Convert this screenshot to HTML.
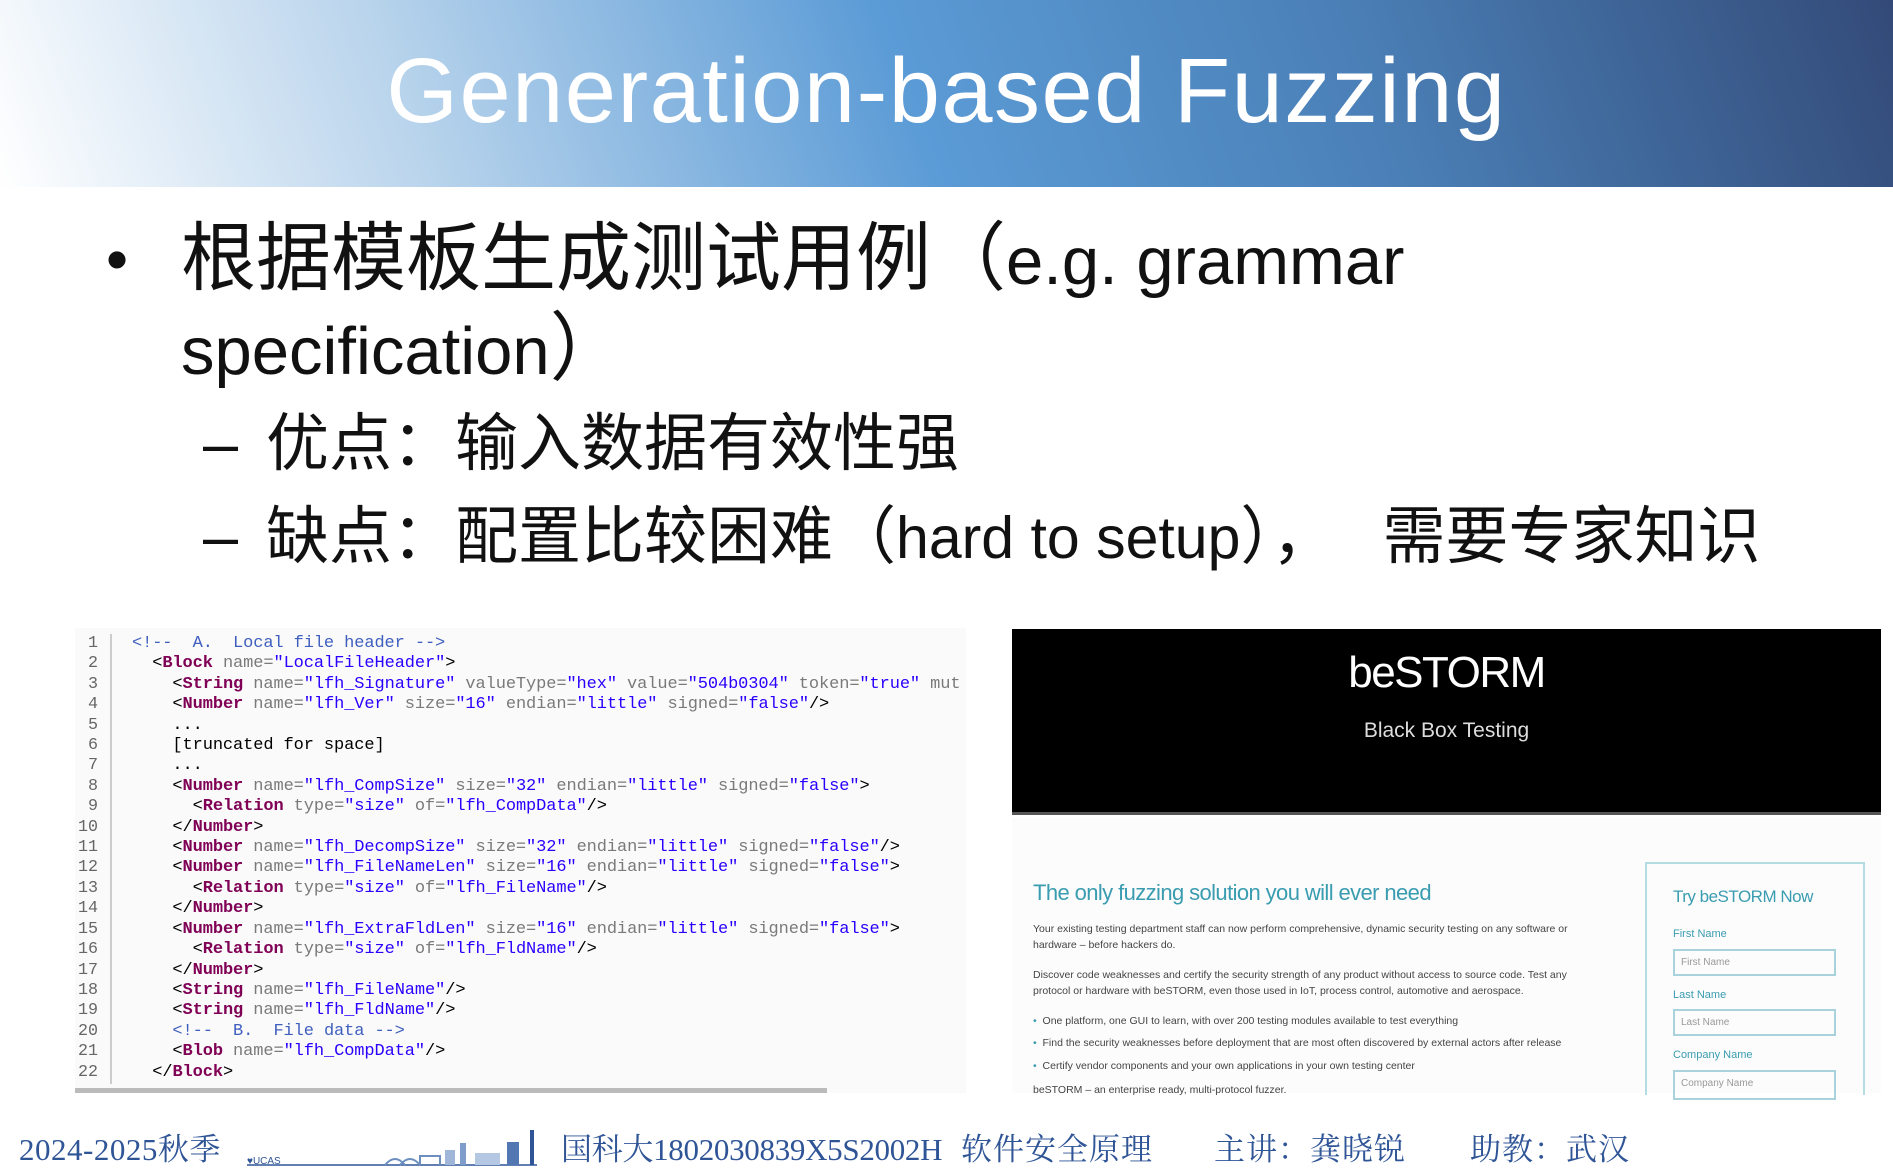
<!DOCTYPE html>
<html><head><meta charset="utf-8">
<style>
*{margin:0;padding:0;box-sizing:border-box}
body{width:1893px;height:1170px;overflow:hidden;background:#fff;position:relative;font-family:"Liberation Sans","Noto Sans CJK SC",sans-serif}
.hdr{position:absolute;left:0;top:0;width:1893px;height:187px;background:linear-gradient(70deg,#ffffff 0%,#b9d4ec 22%,#5b9bd6 48%,#4a7fb6 72%,#334a78 100%)}
.title{position:absolute;left:0;width:1893px;top:36px;text-align:center;color:#fff;font-size:92px;letter-spacing:1.5px;line-height:110px}
.t{position:absolute;color:#111;font-size:63px;line-height:80px;white-space:nowrap;font-family:"Liberation Sans","Noto Sans CJK SC",sans-serif}
.t .c1{font-size:75px}.t .l1{font-size:67px}.t .l2{font-size:59px}
.code{position:absolute;left:75px;top:628px;width:891px;height:465px;background:#fafafa}
.ln{position:absolute;left:40px;width:58px;text-align:right;color:#666;font-family:"Liberation Mono",monospace;font-size:16.7px}
.cl{position:absolute;left:132px;white-space:pre;font-family:"Liberation Mono",monospace;font-size:17px;color:#7a7a7a;letter-spacing:-0.1px}
.k{color:#7f0055;font-weight:bold}.v{color:#2a00ff}.c{color:#3f5fbf}.p{color:#000}
.bs{position:absolute;left:1012px;top:629px;width:869px;height:186px;background:#000;border-bottom:3px solid #555}
.sm{position:absolute;font-size:10.5px;color:#444;white-space:nowrap}
.lab{position:absolute;font-size:11px;color:#3a9cb0}
.inp{position:absolute;left:1673px;width:163px;height:27px;border:2px solid #a9d3dc;font-size:10px;color:#999;padding:6px 6px}
.ft{position:absolute;top:1130px;color:#2f5597;font-size:31px;font-family:"Liberation Serif","Noto Serif CJK SC",serif;white-space:nowrap;line-height:40px}
</style></head><body>
<div class="hdr"></div>
<div class="title">Generation-based Fuzzing</div>

<div class="t" style="left:106px;top:220px">•</div>
<div class="t" style="left:181px;top:218px"><span class="c1">根据模板生成测试用例（</span><span class="l1">e.g. grammar</span></div>
<div class="t" style="left:181px;top:308px"><span class="l1">specification</span><span class="c1">）</span></div>
<div class="t" style="left:203px;top:404px">–</div>
<div class="t" style="left:266px;top:404px">优点：输入数据有效性强</div>
<div class="t" style="left:203px;top:497px">–</div>
<div class="t" style="left:266px;top:497px">缺点：配置比较困难（<span class="l2">hard to setup</span>）， <span style="margin-left:30px">需要专家知识</span></div>

<div class="code"></div>
<div style="position:absolute;left:110px;top:634px;width:2px;height:450px;background:#ccc"></div>
<div style="position:absolute;left:75px;top:1088px;width:752px;height:5px;background:#bbb"></div>
<div class="ln" style="top:634px;line-height:20.4px">1<br>2<br>3<br>4<br>5<br>6<br>7<br>8<br>9<br>10<br>11<br>12<br>13<br>14<br>15<br>16<br>17<br>18<br>19<br>20<br>21<br>22</div>
<div class="cl" style="top:634px;line-height:20.4px;width:834px;overflow:hidden"><span class="c">&lt;!--  A.  Local file header --&gt;</span>
  <span class="p">&lt;</span><span class="k">Block</span> name=<span class="v">"LocalFileHeader"</span><span class="p">&gt;</span>
    <span class="p">&lt;</span><span class="k">String</span> name=<span class="v">"lfh_Signature"</span> valueType=<span class="v">"hex"</span> value=<span class="v">"504b0304"</span> token=<span class="v">"true"</span> mut
    <span class="p">&lt;</span><span class="k">Number</span> name=<span class="v">"lfh_Ver"</span> size=<span class="v">"16"</span> endian=<span class="v">"little"</span> signed=<span class="v">"false"</span><span class="p">/&gt;</span>
<span class="p">    ...
    [truncated for space]
    ...</span>
    <span class="p">&lt;</span><span class="k">Number</span> name=<span class="v">"lfh_CompSize"</span> size=<span class="v">"32"</span> endian=<span class="v">"little"</span> signed=<span class="v">"false"</span><span class="p">&gt;</span>
      <span class="p">&lt;</span><span class="k">Relation</span> type=<span class="v">"size"</span> of=<span class="v">"lfh_CompData"</span><span class="p">/&gt;</span>
    <span class="p">&lt;/</span><span class="k">Number</span><span class="p">&gt;</span>
    <span class="p">&lt;</span><span class="k">Number</span> name=<span class="v">"lfh_DecompSize"</span> size=<span class="v">"32"</span> endian=<span class="v">"little"</span> signed=<span class="v">"false"</span><span class="p">/&gt;</span>
    <span class="p">&lt;</span><span class="k">Number</span> name=<span class="v">"lfh_FileNameLen"</span> size=<span class="v">"16"</span> endian=<span class="v">"little"</span> signed=<span class="v">"false"</span><span class="p">&gt;</span>
      <span class="p">&lt;</span><span class="k">Relation</span> type=<span class="v">"size"</span> of=<span class="v">"lfh_FileName"</span><span class="p">/&gt;</span>
    <span class="p">&lt;/</span><span class="k">Number</span><span class="p">&gt;</span>
    <span class="p">&lt;</span><span class="k">Number</span> name=<span class="v">"lfh_ExtraFldLen"</span> size=<span class="v">"16"</span> endian=<span class="v">"little"</span> signed=<span class="v">"false"</span><span class="p">&gt;</span>
      <span class="p">&lt;</span><span class="k">Relation</span> type=<span class="v">"size"</span> of=<span class="v">"lfh_FldName"</span><span class="p">/&gt;</span>
    <span class="p">&lt;/</span><span class="k">Number</span><span class="p">&gt;</span>
    <span class="p">&lt;</span><span class="k">String</span> name=<span class="v">"lfh_FileName"</span><span class="p">/&gt;</span>
    <span class="p">&lt;</span><span class="k">String</span> name=<span class="v">"lfh_FldName"</span><span class="p">/&gt;</span>
    <span class="c">&lt;!--  B.  File data --&gt;</span>
    <span class="p">&lt;</span><span class="k">Blob</span> name=<span class="v">"lfh_CompData"</span><span class="p">/&gt;</span>
  <span class="p">&lt;/</span><span class="k">Block</span><span class="p">&gt;</span></div>

<div class="bs"></div>
<div style="position:absolute;left:1012px;top:648px;width:869px;text-align:center;color:#fff;font-size:44px;letter-spacing:-1.5px">beSTORM</div>
<div style="position:absolute;left:1012px;top:719px;width:869px;text-align:center;color:#ddd;font-size:21px">Black Box Testing</div>
<div style="position:absolute;left:1012px;top:818px;width:869px;height:275px;background:#fcfcfc"></div>
<div style="position:absolute;left:1033px;top:880px;color:#3a9cb0;font-size:22px;letter-spacing:-0.6px;white-space:nowrap">The only fuzzing solution you will ever need</div>
<div class="sm" style="left:1033px;top:923px">Your existing testing department staff can now perform comprehensive, dynamic security testing on any software or</div>
<div class="sm" style="left:1033px;top:939px">hardware – before hackers do.</div>
<div class="sm" style="left:1033px;top:969px">Discover code weaknesses and certify the security strength of any product without access to source code. Test any</div>
<div class="sm" style="left:1033px;top:985px">protocol or hardware with beSTORM, even those used in IoT, process control, automotive and aerospace.</div>
<div class="sm" style="left:1033px;top:1015px"><span style="color:#3a9cb0">•</span>&nbsp; One platform, one GUI to learn, with over 200 testing modules available to test everything</div>
<div class="sm" style="left:1033px;top:1037px"><span style="color:#3a9cb0">•</span>&nbsp; Find the security weaknesses before deployment that are most often discovered by external actors after release</div>
<div class="sm" style="left:1033px;top:1060px"><span style="color:#3a9cb0">•</span>&nbsp; Certify vendor components and your own applications in your own testing center</div>
<div class="sm" style="left:1033px;top:1084px">beSTORM – an enterprise ready, multi-protocol fuzzer.</div>
<div style="position:absolute;left:1645px;top:862px;width:220px;height:233px;border:2px solid #b5dbe3;border-bottom:none"></div>
<div style="position:absolute;left:1673px;top:887px;color:#3a9cb0;font-size:17px;letter-spacing:-0.5px">Try beSTORM Now</div>
<div class="lab" style="left:1673px;top:928px">First Name</div>
<div class="inp" style="top:949px">First Name</div>
<div class="lab" style="left:1673px;top:989px">Last Name</div>
<div class="inp" style="top:1009px">Last Name</div>
<div class="lab" style="left:1673px;top:1049px">Company Name</div>
<div class="inp" style="top:1070px;height:30px">Company Name</div>

<div class="ft" style="left:19px;letter-spacing:0.5px">2024-2025秋季</div>
<svg style="position:absolute;left:245px;top:1128px" width="295" height="38" viewBox="0 0 295 38">
<text x="2" y="36" font-size="10" fill="#2f5597" font-family="Liberation Sans">♥UCAS</text>
<line x1="2" y1="37" x2="292" y2="37" stroke="#2f5597" stroke-width="1.5"/>
<path d="M140 37 Q150 25 160 37 M155 37 Q165 25 175 37 M175 37 L175 28 L195 28 L195 37" stroke="#6d8fc0" fill="none" stroke-width="2"/>
<rect x="200" y="22" width="10" height="15" fill="#9fb6d8"/><rect x="215" y="15" width="6" height="22" fill="#7f9dcb"/>
<rect x="230" y="25" width="25" height="12" fill="#b5c8e3"/><rect x="262" y="14" width="12" height="23" fill="#5277b3"/>
<rect x="285" y="2" width="4" height="35" fill="#2f5597"/>
</svg>
<div class="ft" style="left:561px;letter-spacing:-0.3px">国科大1802030839X5S2002H</div>
<div class="ft" style="left:961px;letter-spacing:1px">软件安全原理</div>
<div class="ft" style="left:1214px;letter-spacing:1px">主讲：龚晓锐</div>
<div class="ft" style="left:1470px;letter-spacing:1px">助教：武汉</div>
</body></html>
